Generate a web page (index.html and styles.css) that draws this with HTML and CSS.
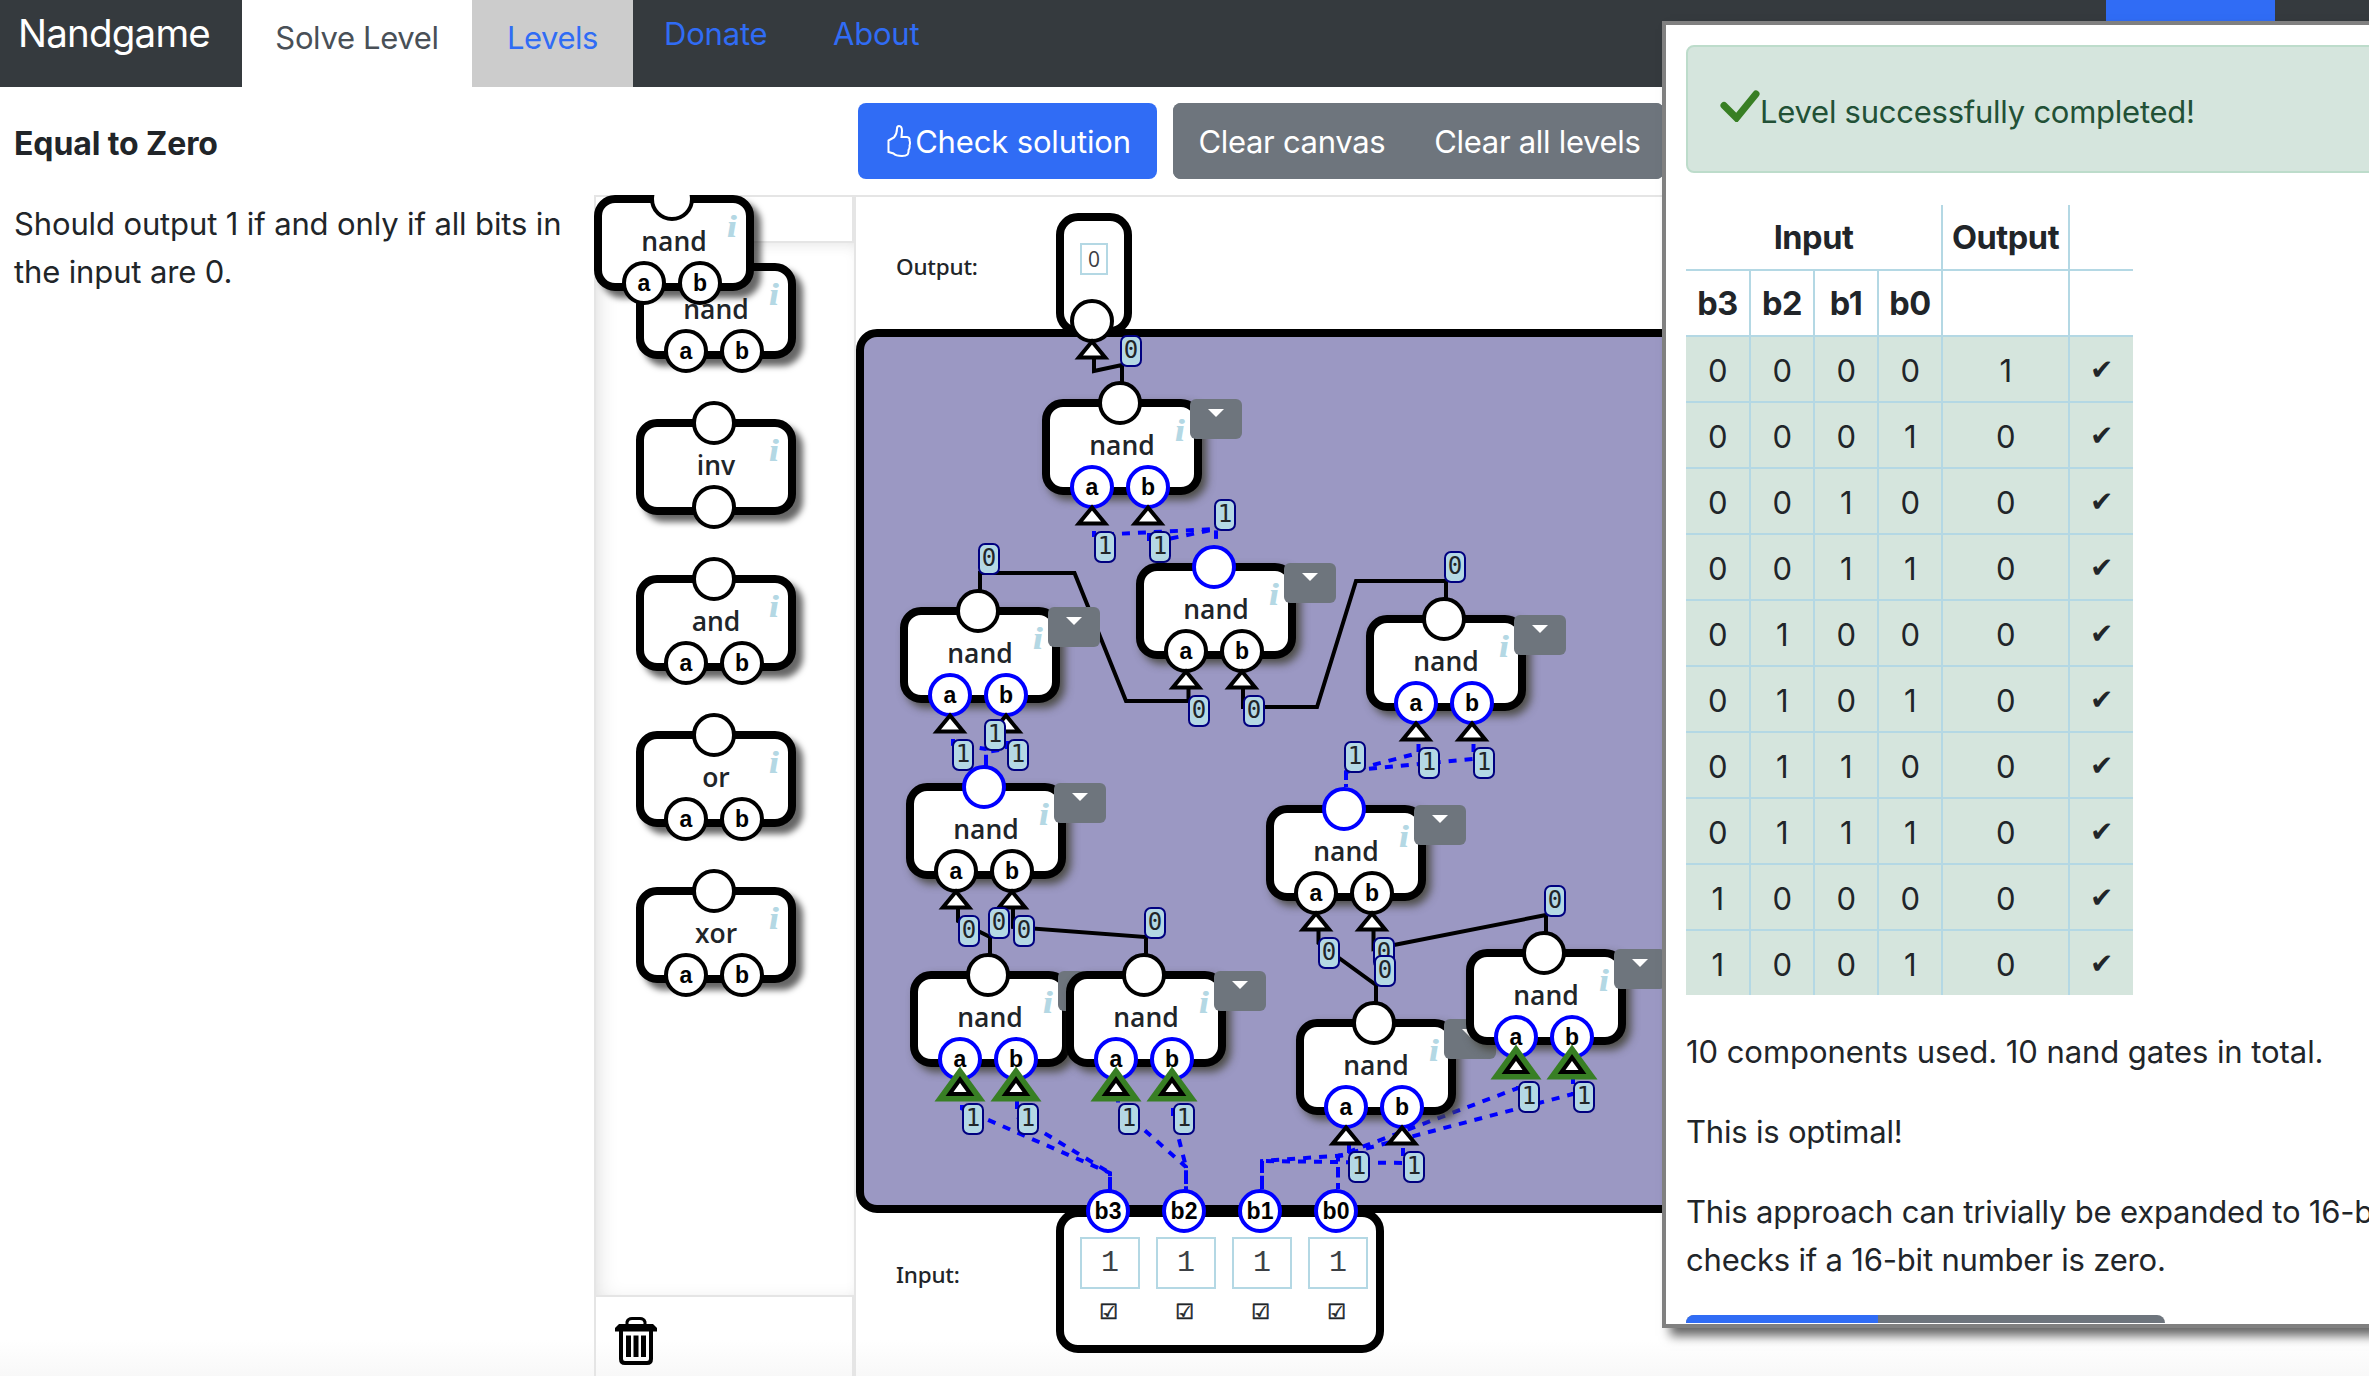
FILE: index.html
```html
<!DOCTYPE html>
<html lang="en">
<head>
<meta charset="utf-8">
<title>Nandgame</title>
<link rel="stylesheet" href="styles.css">
</head>
<body>
<header class="navbar">
  <span class="brand">Nandgame</span>
  <a class="tab tab-active">Solve Level</a>
  <a class="tab tab-levels">Levels</a>
  <a class="link">Donate</a>
  <a class="link">About</a>
  <span class="account"></span>
</header>
<main class="main">
  <section class="intro">
    <h1 class="level-title">Equal to Zero</h1>
    <p class="level-text">Should output 1 if and only if all bits in<br>the input are 0.</p>
  </section>
  <section class="work">
    <div class="toolbar">
      <button class="btn btn-primary"><svg class="thumb" viewBox="0 0 24 32"><path d="M1.5 15.500L7 12.500Q10 9 10 3.500Q10 1 12 1Q15 1 15 6L14.500 12H20Q23 12.500 22.500 15.500Q23.500 18 22.500 20.500Q23 23 21.500 25Q21.800 28 20.500 29.500Q19 31 15 31Q9 31 6.500 28.500L1.500 27Z"/></svg><span class="label check-label">Check solution</span></button>
      <div class="btn-group">
        <button class="btn"><span class="label canvas-label">Clear canvas</span></button>
        <button class="btn"><span class="label all-label">Clear all levels</span></button>
      </div>
    </div>
    <div class="panes">
      <aside class="palette">
        <div class="palette-head"></div>
        <div class="palette-list">
          <div class="gate"><i class="info">i</i><span class="name">nand</span><b class="pin out"></b><b class="pin a">a</b><b class="pin b">b</b></div>
          <div class="gate"><i class="info">i</i><span class="name">inv</span><b class="pin out"></b><b class="pin mid"></b></div>
          <div class="gate"><i class="info">i</i><span class="name">and</span><b class="pin out"></b><b class="pin a">a</b><b class="pin b">b</b></div>
          <div class="gate"><i class="info">i</i><span class="name">or</span><b class="pin out"></b><b class="pin a">a</b><b class="pin b">b</b></div>
          <div class="gate"><i class="info">i</i><span class="name">xor</span><b class="pin out"></b><b class="pin a">a</b><b class="pin b">b</b></div>
        </div>
        <div class="trash"><svg class="trash-icon" viewBox="0 0 42 48"><path d="M12 7V5Q13 1.500 17 1.500H25Q29 1.500 30 5V7" fill="none" stroke="#000" stroke-width="3"/><path d="M4 7H38L42 11V14.500H0V11Z"/><path d="M6 14V42Q6 46 10 46H32Q36 46 36 42V14" fill="none" stroke="#000" stroke-width="4"/><path d="M11 18.500H16V40H11ZM18.500 18.500H23.500V40H18.500ZM26 18.500H31V40H26Z"/></svg></div>
        <div class="gate dragged"><i class="info">i</i><span class="name">nand</span><b class="pin out"></b><b class="pin a">a</b><b class="pin b">b</b></div>
      </aside>
      <div class="stage">
        <div class="board"></div>
        <span class="side-label output-label">Output:</span>
        <span class="side-label input-label">Input:</span>
        <div class="output-node"><span class="value small">0</span></div>
        <div class="input-node">
          <div class="bit"><span class="value">1</span><span class="tick">☑</span></div>
          <div class="bit"><span class="value">1</span><span class="tick">☑</span></div>
          <div class="bit"><span class="value">1</span><span class="tick">☑</span></div>
          <div class="bit"><span class="value">1</span><span class="tick">☑</span></div>
        </div>
        <svg class="wires" viewBox="856 197 1513 1179">
          <g class="wire">
            <path d="M1094 355V371L1122 365V385"/>
            <path d="M980 592V573H1074.500L1126 701H1188.500V686"/>
            <path d="M1446 600V581H1356L1317 707H1243V686"/>
            <path d="M990 957V937L958 921V905"/>
            <path d="M1146 957V937L1013 927V905"/>
            <path d="M1376 1004V985L1318.500 943V928"/>
            <path d="M1546 934V915L1373.500 949V928"/>
          </g>
          <g class="wire on">
            <path d="M1094 531V535L1216 529V545"/>
            <path d="M1149 533V543L1216 529V545"/>
            <path d="M1418.500 744V753L1346 772V787"/>
            <path d="M1473.500 744V759L1346 771V787"/>
            <path d="M953 739V744L986 749V767"/>
            <path d="M1007 741V749L986 752V767"/>
            <path d="M962 1105V1108.500L1110 1173V1191"/>
            <path d="M1017 1101V1116.500L1110 1173V1191"/>
            <path d="M1118 1094.500V1106.500L1186 1167V1191"/>
            <path d="M1173 1108V1116L1186 1167V1191"/>
            <path d="M1349 1145V1155L1262 1161V1189"/>
            <path d="M1403 1148V1163L1262 1161V1189"/>
            <path d="M1518 1086V1088L1338 1156V1189"/>
            <path d="M1573 1076V1094L1338 1156V1189"/>
          </g>
        </svg>
        <b class="pin out-pin"></b><svg class="arrow out-arrow" viewBox="0 0 52 36"><path class="tri" d="M26 13.500L12.800 29.500H39.200Z"/></svg>
        <b class="pin on in3">b3</b><b class="pin on in2">b2</b><b class="pin on in1">b1</b><b class="pin on in0">b0</b>
        <div class="gate g1"><i class="info">i</i><span class="name">nand</span><span class="menu"></span><b class="pin out"></b><b class="pin a on">a</b><b class="pin b on">b</b><svg class="arrow arrow-a" viewBox="0 0 52 36"><path class="tri" d="M26 13.500L12.800 29.500H39.200Z"/></svg><svg class="arrow arrow-b" viewBox="0 0 52 36"><path class="tri" d="M26 13.500L12.800 29.500H39.200Z"/></svg><span class="sig so">0</span><span class="sig sa">1</span><span class="sig sb">1</span></div>
        <div class="gate g2"><i class="info">i</i><span class="name">nand</span><span class="menu"></span><b class="pin out on"></b><b class="pin a">a</b><b class="pin b">b</b><svg class="arrow arrow-a" viewBox="0 0 52 36"><path class="tri" d="M26 13.500L12.800 29.500H39.200Z"/></svg><svg class="arrow arrow-b" viewBox="0 0 52 36"><path class="tri" d="M26 13.500L12.800 29.500H39.200Z"/></svg><span class="sig so">1</span><span class="sig sa">0</span><span class="sig sb">0</span></div>
        <div class="gate g3"><i class="info">i</i><span class="name">nand</span><span class="menu"></span><b class="pin out"></b><b class="pin a on">a</b><b class="pin b on">b</b><svg class="arrow arrow-a" viewBox="0 0 52 36"><path class="tri" d="M26 13.500L12.800 29.500H39.200Z"/></svg><svg class="arrow arrow-b" viewBox="0 0 52 36"><path class="tri" d="M26 13.500L12.800 29.500H39.200Z"/></svg><span class="sig so">0</span><span class="sig sa">1</span><span class="sig sb">1</span></div>
        <div class="gate g4"><i class="info">i</i><span class="name">nand</span><span class="menu"></span><b class="pin out"></b><b class="pin a on">a</b><b class="pin b on">b</b><svg class="arrow arrow-a" viewBox="0 0 52 36"><path class="tri" d="M26 13.500L12.800 29.500H39.200Z"/></svg><svg class="arrow arrow-b" viewBox="0 0 52 36"><path class="tri" d="M26 13.500L12.800 29.500H39.200Z"/></svg><span class="sig so">0</span><span class="sig sa">1</span><span class="sig sb">1</span></div>
        <div class="gate g5"><i class="info">i</i><span class="name">nand</span><span class="menu"></span><b class="pin out on"></b><b class="pin a">a</b><b class="pin b">b</b><svg class="arrow arrow-a" viewBox="0 0 52 36"><path class="tri" d="M26 13.500L12.800 29.500H39.200Z"/></svg><svg class="arrow arrow-b" viewBox="0 0 52 36"><path class="tri" d="M26 13.500L12.800 29.500H39.200Z"/></svg><span class="sig so">1</span><span class="sig sa">0</span><span class="sig sb">0</span></div>
        <div class="gate g6"><i class="info">i</i><span class="name">nand</span><span class="menu"></span><b class="pin out on"></b><b class="pin a">a</b><b class="pin b">b</b><svg class="arrow arrow-a" viewBox="0 0 52 36"><path class="tri" d="M26 13.500L12.800 29.500H39.200Z"/></svg><svg class="arrow arrow-b" viewBox="0 0 52 36"><path class="tri" d="M26 13.500L12.800 29.500H39.200Z"/></svg><span class="sig so">1</span><span class="sig sa">0</span><span class="sig sb">0</span></div>
        <div class="gate g7"><i class="info">i</i><span class="name">nand</span><span class="menu"></span><b class="pin out"></b><b class="pin a on">a</b><b class="pin b on">b</b><svg class="arrow arrow-a" viewBox="0 0 52 36"><path class="glow" d="M26 .5L.5 35.500H51.500Z"/><path class="tri" d="M26 13.500L15.500 28H36.500Z"/></svg><svg class="arrow arrow-b" viewBox="0 0 52 36"><path class="glow" d="M26 .5L.5 35.500H51.500Z"/><path class="tri" d="M26 13.500L15.500 28H36.500Z"/></svg><span class="sig so">0</span><span class="sig sa">1</span><span class="sig sb">1</span></div>
        <div class="gate g8"><i class="info">i</i><span class="name">nand</span><span class="menu"></span><b class="pin out"></b><b class="pin a on">a</b><b class="pin b on">b</b><svg class="arrow arrow-a" viewBox="0 0 52 36"><path class="glow" d="M26 .5L.5 35.500H51.500Z"/><path class="tri" d="M26 13.500L15.500 28H36.500Z"/></svg><svg class="arrow arrow-b" viewBox="0 0 52 36"><path class="glow" d="M26 .5L.5 35.500H51.500Z"/><path class="tri" d="M26 13.500L15.500 28H36.500Z"/></svg><span class="sig so">0</span><span class="sig sa">1</span><span class="sig sb">1</span></div>
        <div class="gate g9"><i class="info">i</i><span class="name">nand</span><span class="menu"></span><b class="pin out"></b><b class="pin a on">a</b><b class="pin b on">b</b><svg class="arrow arrow-a" viewBox="0 0 52 36"><path class="tri" d="M26 13.500L12.800 29.500H39.200Z"/></svg><svg class="arrow arrow-b" viewBox="0 0 52 36"><path class="tri" d="M26 13.500L12.800 29.500H39.200Z"/></svg><span class="sig so">0</span><span class="sig sa">1</span><span class="sig sb">1</span></div>
        <div class="gate g10"><i class="info">i</i><span class="name">nand</span><span class="menu"></span><b class="pin out"></b><b class="pin a on">a</b><b class="pin b on">b</b><svg class="arrow arrow-a" viewBox="0 0 52 36"><path class="glow" d="M26 .5L.5 35.500H51.500Z"/><path class="tri" d="M26 13.500L15.500 28H36.500Z"/></svg><svg class="arrow arrow-b" viewBox="0 0 52 36"><path class="glow" d="M26 .5L.5 35.500H51.500Z"/><path class="tri" d="M26 13.500L15.500 28H36.500Z"/></svg><span class="sig so">0</span><span class="sig sa">1</span><span class="sig sb">1</span></div>
      </div>
    </div>
  </section>
</main>
<div class="dialog">
  <div class="alert"><svg class="alert-icon" viewBox="0 0 40 32"><path d="M4 15.500L16.500 28L36 4"/></svg><span class="alert-text">Level successfully completed!</span></div>
  <table class="truth">
    <colgroup><col class="c1"><col class="cb"><col class="cb"><col class="cb"><col class="co"><col class="cc"></colgroup>
    <tr><th colspan="4">Input</th><th>Output</th><th></th></tr>
    <tr><th>b3</th><th>b2</th><th>b1</th><th>b0</th><th></th><th></th></tr>
    <tr class="ok"><td>0</td><td>0</td><td>0</td><td>0</td><td>1</td><td class="mark">✔</td></tr>
    <tr class="ok"><td>0</td><td>0</td><td>0</td><td>1</td><td>0</td><td class="mark">✔</td></tr>
    <tr class="ok"><td>0</td><td>0</td><td>1</td><td>0</td><td>0</td><td class="mark">✔</td></tr>
    <tr class="ok"><td>0</td><td>0</td><td>1</td><td>1</td><td>0</td><td class="mark">✔</td></tr>
    <tr class="ok"><td>0</td><td>1</td><td>0</td><td>0</td><td>0</td><td class="mark">✔</td></tr>
    <tr class="ok"><td>0</td><td>1</td><td>0</td><td>1</td><td>0</td><td class="mark">✔</td></tr>
    <tr class="ok"><td>0</td><td>1</td><td>1</td><td>0</td><td>0</td><td class="mark">✔</td></tr>
    <tr class="ok"><td>0</td><td>1</td><td>1</td><td>1</td><td>0</td><td class="mark">✔</td></tr>
    <tr class="ok"><td>1</td><td>0</td><td>0</td><td>0</td><td>0</td><td class="mark">✔</td></tr>
    <tr class="ok"><td>1</td><td>0</td><td>0</td><td>1</td><td>0</td><td class="mark">✔</td></tr>
  </table>
  <p class="note note-count">10 components used. 10 nand gates in total.</p>
  <p class="note">This is optimal!</p>
  <p class="note">This approach can trivially be expanded to 16-b<br>checks if a 16-bit number is zero.</p>
  <div class="actions"><span class="action-next"></span><span class="action-close"></span></div>
</div>
</body>
</html>
```
FILE: styles.css
```css
* { box-sizing: border-box; }
body {
  margin: 0;
  width: 2369px;
  height: 1376px;
  overflow: hidden;
  position: relative;
  display: flex;
  flex-direction: column;
  font: 31px/48px Inter, "Liberation Sans", sans-serif;
  letter-spacing: -0.45px;
  color: #212529;
  background: #fff linear-gradient(#fff, #f8f8f8) bottom / 100% 36px no-repeat;
}
p, h1 { margin: 0; }

/* top bar */
.navbar {
  flex: none;
  height: 87px;
  display: flex;
  align-items: stretch;
  background: #353a3e;
  color: #306cf5;
}
.brand { width: 242px; padding: 9px 0 0 18px; font-size: 38.5px; letter-spacing: -.8px; color: #fff; white-space: nowrap; }
.tab { padding-top: 14px; text-align: center; white-space: nowrap; }
.tab-active { width: 230px; background: #fff; color: #495057; letter-spacing: -.35px; }
.tab-levels { width: 161px; background: #ccc; }
.link { padding-top: 10px; margin-left: 31px; width: 138px; letter-spacing: -.2px; white-space: nowrap; }
.account { width: 169px; height: 21px; margin-left: 1135px; background: #306cf5; }

.main { flex: 1; display: flex; min-height: 0; }
.intro { width: 594px; padding: 33px 0 0 14px; white-space: nowrap; }
.level-title { font-size: 32px; line-height: 48px; font-weight: 700; letter-spacing: -.1px; }
.level-text { margin-top: 32px; letter-spacing: -.13px; }

.work { flex: 1; display: flex; flex-direction: column; min-width: 0; }
.toolbar { height: 108px; padding: 16px 0 0 264px; display: flex; align-items: flex-start; gap: 16px; }
.btn {
  height: 76px;
  border: 0;
  padding: 0;
  display: flex;
  align-items: center;
  justify-content: center;
  font: inherit;
  letter-spacing: -.3px;
  color: #fff;
  background: #6e757d;
  white-space: nowrap;
}
.label { padding: 2px 0 0 2px; }
.btn-primary { width: 299px; border-radius: 8px; background: #306cf5; letter-spacing: -.15px; }
.btn-group { display: flex; width: 491px; border-radius: 8px; overflow: hidden; background: #6e757d; }
.btn-group .btn { flex: 1 1 auto; }
.thumb { width: 24px; height: 32px; margin: 0 2px 0 3px; }
.thumb path { fill: none; stroke: #fff; stroke-width: 2; }

.panes { flex: 1; display: flex; border-top: 2px solid #e5e5e5; min-height: 0; }

/* component palette */
.palette {
  width: 262px;
  margin-top: -2px;
  position: relative;
  display: flex;
  flex-direction: column;
  border: 2px solid #e5e5e5;
  border-bottom: 0;
  clip-path: inset(0);
}
.palette-head { height: 46px; border: solid #e5e5e5; border-width: 0 2px 2px 0; }
.palette-list {
  height: 1052px;
  padding: 20px 40px;
  display: flex;
  flex-direction: column;
  gap: 60px;
  box-shadow: inset 10px 0 20px -6px rgb(0 0 0 / .1), inset 0 6px 16px -6px rgb(0 0 0 / .08);
}
.trash { flex: 1; padding: 20px 0 0 19px; border: solid #e5e5e5; border-width: 2px 2px 0 0; line-height: 0; }
.trash-icon { width: 42px; height: 48px; }

/* gates */
.gate {
  position: relative;
  flex: none;
  width: 160px;
  height: 96px;
  border: 8px solid #000;
  border-radius: 21px;
  background: #fff;
  box-shadow: 7px 7px 6px rgb(0 0 0 / .6);
}
.name {
  display: block;
  margin-top: 20px;
  text-align: center;
  font: 650 26.500px/36px "Open Sans", "Noto Sans", sans-serif;
  letter-spacing: 0;
}
.info {
  position: absolute;
  left: 125px;
  top: 5px;
  font: italic 700 32px/36px "Liberation Serif", serif;
  color: #b4d8e4;
  text-shadow: 1px 0 #b4d8e4;
}
.pin {
  position: absolute;
  width: 44px;
  height: 44px;
  border: 4px solid #000;
  border-radius: 50%;
  background: #fff;
  color: #000;
  font: 700 23px/37px "Liberation Sans", sans-serif;
  text-align: center;
  letter-spacing: 0;
}
.pin.on { border-color: #00f; }
.out { left: 48px; top: -26px; }
.mid { left: 48px; top: 58px; }
.a { left: 20px; top: 58px; }
.b { left: 76px; top: 58px; }
.dragged { position: absolute; left: -2px; top: -2px; }

/* workspace */
.stage { flex: 1; position: relative; }
.stage .gate { position: absolute; box-shadow: 5px 5px 8px rgb(70 70 60 / .9); }
.board {
  height: 884px;
  margin-top: 132px;
  border: 8px solid #000;
  border-radius: 21px;
  background: #9b98c3;
}
.side-label { position: absolute; left: 40px; font: 500 22.500px/30px "Noto Sans", sans-serif; letter-spacing: -.2px; }
.output-label { top: 55px; }
.input-label { top: 1063px; }
.output-node, .input-node { position: absolute; left: 200px; border: 8px solid #000; border-radius: 22px; background: #fff; }
.output-node { width: 76px; height: 122px; top: 16px; padding: 22px 0 0 16px; }
.input-node { width: 328px; height: 144px; top: 1012px; padding: 20px 0 0 16px; display: flex; gap: 16px; }
.bit { display: flex; flex-direction: column; align-items: center; }
.value {
  display: block;
  width: 60px;
  height: 52px;
  border: 2px solid #b4d8e4;
  font: 30px/48px "Liberation Mono", monospace;
  letter-spacing: 0;
  text-align: center;
  color: #3c4044;
}
.small { width: 28px; height: 32px; font: 21px/28px "Open Sans", sans-serif; }
.tick { margin-top: 8px; margin-left: -3px; font: 21px/30px "DejaVu Sans", sans-serif; -webkit-text-stroke: .6px; }
.wires { position: absolute; left: 0; top: 0; width: 1513px; height: 1179px; }
.wire path { fill: none; stroke: #000; stroke-width: 4; }
.wire.on path { stroke: #00f; stroke-dasharray: 8 8; }
.out-pin { left: 214px; top: 102px; }
.in3 { left: 230px; top: 992px; }
.in2 { left: 306px; top: 992px; }
.in1 { left: 382px; top: 992px; }
.in0 { left: 458px; top: 992px; }
.arrow { position: absolute; width: 52px; height: 36px; }
.out-arrow { left: 210px; top: 131px; }
.arrow-a { left: 16px; top: 87px; }
.arrow-b { left: 72px; top: 87px; }
.tri { fill: #fff; stroke: #000; stroke-width: 4; }
.glow { fill: #387f24; }
.menu { position: absolute; left: 140px; top: -8px; width: 52px; height: 40px; border-radius: 6px; background: #6e757d; }
.menu::after { content: ""; position: absolute; left: 18px; top: 10px; border: 8px solid transparent; border-top-color: #fff; border-bottom: 0; }
.sig {
  position: absolute;
  width: 22px;
  height: 32px;
  border: 2px solid #000080;
  border-radius: 7px;
  background: #b4d8e4;
  font: 24px/27px "DejaVu Sans Mono", monospace;
  letter-spacing: 0;
  display: flex;
  justify-content: center;
}
.so { left: 70px; top: -72px; }
.sa { left: 44px; top: 124px; }
.sb { left: 99px; top: 124px; }
.g1 { left: 186px; top: 202px; }
.g2 { left: 280px; top: 366px; }
.g3 { left: 44px; top: 410px; }
.g4 { left: 510px; top: 418px; }
.g5 { left: 410px; top: 608px; }
.g6 { left: 50px; top: 586px; }
.g7 { left: 54px; top: 774px; }
.g8 { left: 210px; top: 774px; }
.g9 { left: 440px; top: 822px; }
.g10 { left: 610px; top: 752px; }

/* result dialog, laid over the workspace */
.dialog {
  position: absolute;
  left: 1662px;
  top: 21px;
  width: 760px;
  height: 1307px;
  padding: 20px 20px 0;
  overflow: hidden;
  border: 4px solid #808080;
  background: #fff;
  box-shadow: 8px 8px 10px rgb(0 0 0 / .6);
}
.alert {
  height: 128px;
  padding: 5px 0 0 32px;
  display: flex;
  align-items: center;
  border: 2px solid #bddccb;
  border-radius: 8px;
  background: #d5e5dd;
  color: #225136;
  white-space: nowrap;
  letter-spacing: -.25px;
}
.alert-icon { width: 40px; height: 32px; margin-top: -12px; }
.alert-icon path { fill: none; stroke: #387f24; stroke-width: 7; stroke-linecap: round; }
.truth { width: 447px; margin-top: 32px; border-collapse: separate; border-spacing: 0; table-layout: fixed; text-align: center; }
.c1 { width: 65px; } .cb { width: 64px; } .co { width: 127px; } .cc { width: 63px; }
.truth th, .truth td { height: 66px; padding: 3px 0 0; border: solid #b4d8e4; border-width: 0 2px 2px 0; }
.truth th { font-size: 32.500px; padding-top: 2px; }
.truth tr > :last-child { border-right: 0; }
.truth tr:last-child td { height: 64px; border-bottom: 0; }
.ok { background: #d5e5dd; }
.truth .mark { font: 28px/48px "DejaVu Sans", sans-serif; padding-top: 2px; }
.note { position: relative; top: 1px; margin-top: 32px; letter-spacing: -.2px; white-space: nowrap; }
.note-count { letter-spacing: -.06px; }
.actions { margin-top: 32px; display: flex; width: 479px; height: 8px; border-radius: 8px 8px 0 0; overflow: hidden; background: #6e757d; }
.action-next { width: 192px; background: #306cf5; }
```
